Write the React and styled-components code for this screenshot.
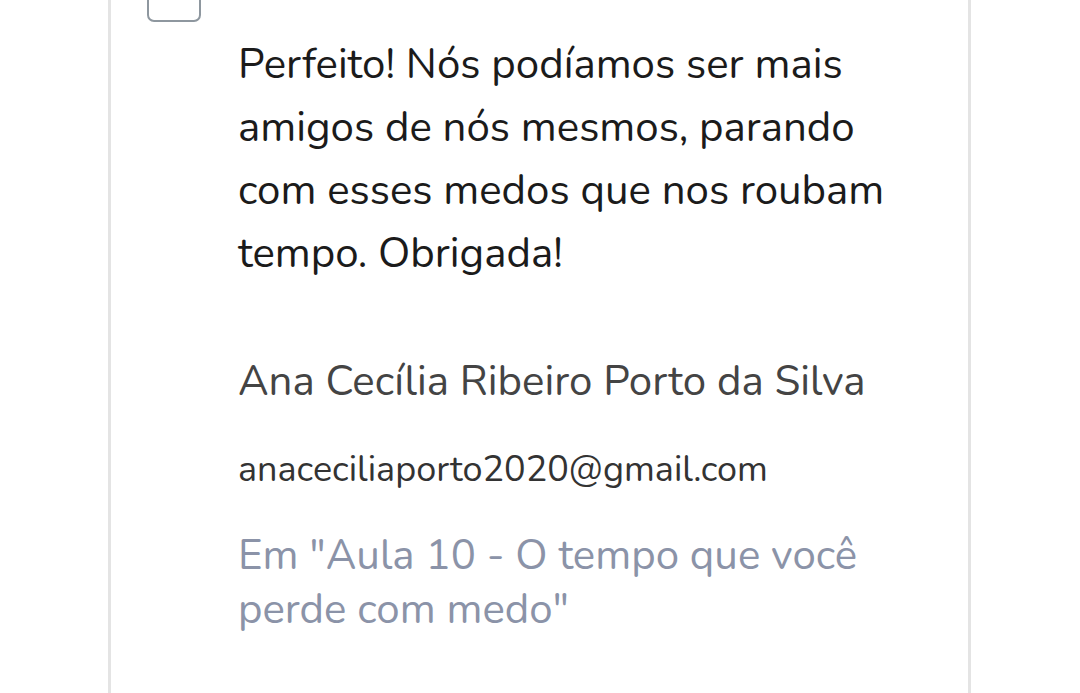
import React from 'react';
import styled, { createGlobalStyle } from 'styled-components';

const GlobalStyle = createGlobalStyle`
  html, body {
    margin: 0;
    padding: 0;
    background: #ffffff;
    overflow: hidden;
  }
  body {
    font-family: "Nunito", "Lato", "Noto Sans", sans-serif;
  }
`;

const Page = styled.div`
  width: 1080px;
  height: 693px;
  overflow: hidden;
  background: #ffffff;
`;

const Card = styled.div`
  margin-left: 108px;
  margin-top: -32px;
  width: 857px;
  min-height: 760px;
  border-left: 3px solid #e4e4e4;
  border-right: 3px solid #e4e4e4;
  background: #ffffff;
`;

const CheckRow = styled.div`
  display: flex;
  padding-left: 36px;
`;

const CheckBox = styled.div`
  width: 50px;
  height: 50px;
  border: 2px solid #8e979f;
  border-radius: 7px;
  box-sizing: content-box;
`;

const Body = styled.div`
  display: flex;
  flex-direction: column;
  padding-left: 127px;
  padding-top: 11px;
`;

const Message = styled.p`
  margin: 0;
  font-size: 42px;
  line-height: 63px;
  color: #1b1b1b;
  white-space: nowrap;
`;

const Author = styled.div`
  margin-top: 72px;
  font-size: 42px;
  line-height: 50px;
  color: #444444;
  white-space: nowrap;
`;

const Email = styled.div`
  margin-top: 43px;
  font-size: 36px;
  line-height: 40px;
  color: #333333;
  white-space: nowrap;
`;

const Lesson = styled.div`
  margin-top: 39px;
  font-size: 42px;
  line-height: 54px;
  color: #8b93a8;
  white-space: nowrap;
`;

export default function App() {
  return (
    <Page>
      <GlobalStyle />
      <Card>
        <CheckRow>
          <CheckBox />
        </CheckRow>
        <Body>
          <Message>
            Perfeito! Nós podíamos ser mais
            <br />
            amigos de nós mesmos, parando
            <br />
            com esses medos que nos roubam
            <br />
            tempo. Obrigada!
          </Message>
          <Author>Ana Cecília Ribeiro Porto da Silva</Author>
          <Email>anaceciliaporto2020@gmail.com</Email>
          <Lesson>
            Em "Aula 10 - O tempo que você
            <br />
            perde com medo"
          </Lesson>
        </Body>
      </Card>
    </Page>
  );
}
